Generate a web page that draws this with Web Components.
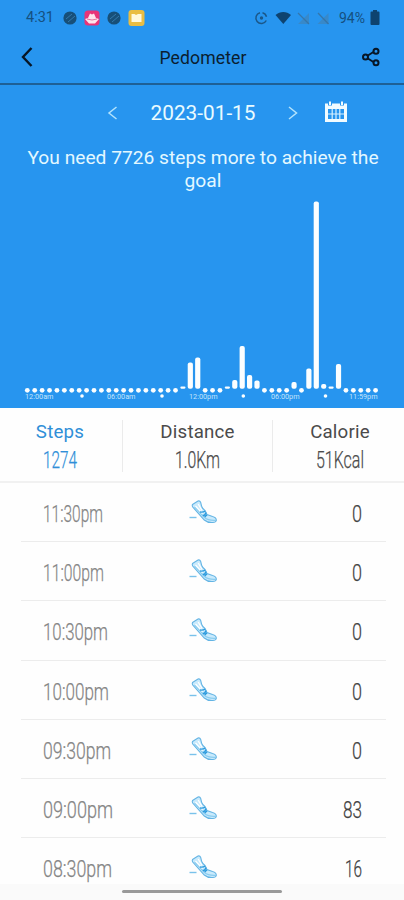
<!DOCTYPE html>
<html lang="en">
<head>
<meta charset="utf-8">
<title>Pedometer</title>
<style>
  body {
    margin: 0;
    width: 404px;
    height: 900px;
    overflow: hidden;
    background: #fefefe;
    font-family: Roboto, "Liberation Sans", sans-serif;
  }
</style>
</head>
<body>
<pedometer-app></pedometer-app>

<script>
const BLUE = "#2795ef";

// text squeezed to a given width, for the narrow numerals
class NarrowText extends HTMLElement {
  connectedCallback() {
    const width = this.getAttribute("width");
    const size = this.getAttribute("size") || 24;
    this.attachShadow({ mode: "open" }).innerHTML = /* HTML */ `
      <style>
        :host { display: block; line-height: 0; }
        svg { display: block; overflow: visible; }
        text { fill: currentColor; font-weight: 300; stroke: currentColor; stroke-width: .25px; }
      </style>
      <svg width="${width}" height="28">
        <text x="0" y="24" font-size="${size}"
          textLength="${width}" lengthAdjust="spacingAndGlyphs">${this.getAttribute("value")}</text>
      </svg>
    `;
  }
}

class StatusBar extends HTMLElement {
  connectedCallback() {
    this.attachShadow({ mode: "open" }).innerHTML = /* HTML */ `
      <style>
        :host {
          display: flex;
          align-items: center;
          justify-content: space-between;
          box-sizing: border-box;
          height: 35px;
          padding: 0 24px 0 26px;
          color: #15507f;
          font-size: 14px;
        }
        .group { display: flex; align-items: center; }
        svg { display: block; overflow: visible; }
        .time { width: 37px; font-size: 14.5px; }
        .battery { width: 27px; margin: 0 4px 0 9px; }
      </style>
      <div class="group">
        <span class="time">4:31</span>
        <svg width="84" height="18" viewBox="0 0 84 18">
          <circle cx="7" cy="9" r="6.6" fill="#174f78"/>
          <path d="M3 10l6-5M5 13l7-6" stroke="#3479ab" stroke-width="1"/>
          <rect x="21.5" y="1.5" width="15" height="15" rx="3.5" fill="#e83478"/>
          <path d="M22 10l3-1 2-4.5 2 1 2-1 2 4.5 3 1-4 4.5h-6z" fill="#ffe3ec"/>
          <path d="M24 10q5 2 10 0" fill="none" stroke="#e4749f" stroke-width="1"/>
          <circle cx="51" cy="9" r="6.6" fill="#174f78"/>
          <path d="M47 10l6-5M49 13l7-6" stroke="#3479ab" stroke-width="1"/>
          <rect x="65.5" y="1" width="16" height="16" rx="3" fill="#e9bd43"/>
          <path d="M68.5 5h3l1.5 1 2-1h3.5v8h-10z" fill="#fff8dc"/>
        </svg>
      </div>
      <div class="group">
        <svg width="74" height="18" viewBox="0 0 74 18">
          <path d="M4 3.7a5.5 5.5 0 1 0 6.3 7.8M6.500 3.700a5.500 5.500 0 0 1 4 4" fill="none" stroke="#1b5788" stroke-width="1.5"/>
          <circle cx="5.5" cy="9" r="1.7" fill="#1b5788"/>
          <path d="M19.5 6c4.500-4 11-4 15.500 0l-7.700 9z" fill="#0e4370"/>
          <path d="M53 4v11H42zM72.5 4v11h-11z" fill="#3f84bb" opacity=".7"/>
          <path d="M42 4l11 11M62 4l10.500 11" stroke="#3576ab" stroke-width="1.3"/>
        </svg>
        <span class="battery">94%</span>
        <svg width="10" height="15" viewBox="0 0 10 15">
          <path d="M3 0h4v1.5h1.500q1 0 1 1V14q0 1-1 1h-7q-1 0-1-1V2.500q0-1 1-1H3z" fill="#0e4370"/>
        </svg>
      </div>
    `;
  }
}

class TitleBar extends HTMLElement {
  connectedCallback() {
    this.attachShadow({ mode: "open" }).innerHTML = /* HTML */ `
      <style>
        :host {
          display: grid;
          grid-template-columns: 40px 1fr 40px;
          align-items: center;
          box-sizing: border-box;
          height: 50px;
          padding-bottom: 4px;
          border-bottom: 2px solid #1e6096;
          color: #0b1e30;
          text-align: center;
          font-size: 17.6px;
          letter-spacing: .1px;
        }
        svg { display: block; overflow: visible; }
        .title { padding: 2px 0 0 2px; }
      </style>
      <svg width="40" height="24" viewBox="0 0 40 24">
        <path d="M31.5 3L23 12l8.500 9" fill="none" stroke="#071626" stroke-width="2.4"/>
      </svg>
      <span class="title"><slot></slot></span>
      <svg width="40" height="24" viewBox="0 0 40 24">
        <path d="M1.5 12L11 6M1.500 12L11 18" stroke="#071626" stroke-width="1.9"/>
        <g fill="${BLUE}" stroke="#071626" stroke-width="2">
          <circle cx="1.5" cy="12" r="2.5"/>
          <circle cx="12" cy="6.2" r="2.5"/>
          <circle cx="12" cy="17.8" r="2.5"/>
        </g>
      </svg>
    `;
  }
}

class DatePicker extends HTMLElement {
  connectedCallback() {
    this.attachShadow({ mode: "open" }).innerHTML = /* HTML */ `
      <style>
        :host {
          display: grid;
          grid-template-columns: 11px 170px 11px 24px;
          align-items: center;
          height: 30px;
          padding: 13px 0 0 107px;
          color: #e9fbff;
          font-size: 20.8px;
          text-align: center;
        }
        svg { display: block; }
        .cal { margin: -2px 0 0 25px; }
      </style>
      <svg width="11" height="16" viewBox="0 0 11 16"><path d="M9.5 2L2 8l7.500 6" fill="none" stroke="#b3e3fc" stroke-width="1.5"/></svg>
      <span class="date"><slot></slot></span>
      <svg width="11" height="16" viewBox="0 0 11 16"><path d="M1 2l7.500 6L1 14" fill="none" stroke="#b3e3fc" stroke-width="1.5"/></svg>
      <svg class="cal" width="24" height="22" viewBox="0 0 24 22">
        <path d="M1 2.500h22V21H1z" fill="#f1fbff"/>
        <path d="M4 1h4v3.500H4zM16 1h4v3.500h-4z" fill="${BLUE}"/>
        <path d="M6 .5v3.500M18 .5v3.500" stroke="#f1fbff" stroke-width="2"/>
        <path d="M4 8h16v10H4z" fill="${BLUE}"/>
        <path d="M8.200 8v10M12 8v10M15.800 8v10M4 13h16" fill="none" stroke="#d9f2ff" stroke-width="1.200"/>
      </svg>
    `;
  }
}

class StepChart extends HTMLElement {
  connectedCallback() {
    // bar top of every half hour that has steps, the rest are dots
    const tops = {
      21: 386.5, 22: 362.5, 23: 357.5, 27: 386.5, 28: 380, 29: 346, 30: 375, 31: 380.5,
      36: 382, 38: 368.5, 39: 201.5, 40: 384, 41: 386.5, 42: 364
    };
    const labels = [["12:00am", 25], ["06:00am", 107], ["12:00pm", 189], ["06:00pm", 271], ["11:59pm", 349]];
    let bars = "";
    for (let i = 0; i < 48; i++) {
      const x = 27.3 + i * 7.41;
      bars += tops[i]
        ? `<rect x="${x - 2.6}" y="${tops[i]}" width="5.2" height="${388.7 - tops[i]}" rx="${Math.min(2, (388.7 - tops[i]) / 2)}"/>`
        : `<circle cx="${x}" cy="390.3" r="2.4"/>`;
    }
    this.attachShadow({ mode: "open" }).innerHTML = /* HTML */ `
      <style>
        :host { display: block; }
        svg { display: block; fill: #fbfeff; }
        text { font-size: 7px; fill: #c3e4fb; }
      </style>
      <svg width="404" height="213" viewBox="0 195 404 213">
        ${bars}
        ${[82, 162, 243.3, 325.5].map(x => `<circle cx="${x}" cy="396" r="1.8"/>`).join("")}
        ${labels.map(([text, x]) => `<text x="${x}" y="398.7" textLength="28.5" lengthAdjust="spacingAndGlyphs">${text}</text>`).join("")}
      </svg>
    `;
  }
}

class StatItem extends HTMLElement {
  connectedCallback() {
    this.attachShadow({ mode: "open" }).innerHTML = /* HTML */ `
      <style>
        :host {
          display: flex;
          flex-direction: column;
          align-items: center;
          box-sizing: border-box;
          height: 52px;
          color: #4b4b4b;
          font-size: 18.7px;
          letter-spacing: .2px;
        }
        :host([active]) { color: #2f8fd8; padding-right: 2px; }
        :host([divided]) { border-left: 1.5px solid #ebebeb; }
        .label { line-height: 24px; height: 24px; }
        narrow-text { letter-spacing: 0; }
      </style>
      <span class="label"><slot></slot></span>
      <narrow-text value="${this.getAttribute("value")}" width="${this.getAttribute("width")}" size="23.5"></narrow-text>
    `;
  }
}

class StepRow extends HTMLElement {
  connectedCallback() {
    this.attachShadow({ mode: "open" }).innerHTML = /* HTML */ `
      <style>
        :host {
          display: grid;
          grid-template-columns: 146px 30px 1fr;
          align-items: center;
          box-sizing: border-box;
          height: 59.2px;
          margin: 0 18px 0 21px;
          padding: 0 24px 0 22px;
          border-bottom: 1.5px solid #ececec;
          color: #858585;
        }
        .count { justify-self: end; color: #424242; }
        svg { display: block; }
      </style>
      <narrow-text value="${this.getAttribute("time")}" width="${this.getAttribute("time-width")}"></narrow-text>
      <svg width="30" height="26" viewBox="0 0 30 26">
        <path d="M3.500 5.500L9 2q1.800-.6 2.600 1.200l1 4q1 2.700 3.400 4.300l2 4 5.500 2q4 1 3.800 4-.4 2-3.500 2-5.500.3-8.500-2.500L3.700 8q-.8-1.500-.2-2.500z" fill="#c9eafc" stroke="#64b4e4" stroke-width="1.1"/>
        <path d="M5.500 8l10 10.500q3.500 3.300 11.500 2.800" fill="none" stroke="#8accef" stroke-width="1.2"/>
        <path d="M6.500 7l7 7.500M9.200 5l3.800 6.500" fill="none" stroke="#fff" stroke-width="1.3"/>
        <path d="M11 13q3.500 .5 5-1M17 13.500q-1.300 3.500-3.200 3M18 15.700l-2.300 2.300" fill="none" stroke="#2999dd" stroke-width="1.4"/>
        <path d="M.5 18.500h7" stroke="#79c2eb" stroke-width="1.4"/>
      </svg>
      <narrow-text class="count" value="${this.getAttribute("count")}" width="${this.getAttribute("count-width")}"></narrow-text>
    `;
  }
}

class PedometerApp extends HTMLElement {
  connectedCallback() {
    const rows = [
      ["11:30pm", 60, "0", 10],
      ["11:00pm", 61, "0", 10],
      ["10:30pm", 65, "0", 10],
      ["10:00pm", 66, "0", 10],
      ["09:30pm", 68, "0", 10],
      ["09:00pm", 70, "83", 19],
      ["08:30pm", 69, "16", 17]
    ];
    this.attachShadow({ mode: "open" }).innerHTML = /* HTML */ `
      <style>
        :host { display: block; position: relative; height: 900px; overflow: hidden; }
        .top { height: 408px; background: ${BLUE}; }
        .goal {
          box-sizing: border-box;
          height: 67px;
          margin: 0;
          padding: 19px 20px 0 22px;
          color: #e3f8ff;
          font-size: 19.2px;
          line-height: 22.5px;
          text-align: center;
        }
        .stats {
          display: grid;
          grid-template-columns: 122px 150px 135px;
          box-sizing: border-box;
          height: 75px;
          padding-top: 12px;
          border-bottom: 2px solid #f1f1f1;
        }
        .gesture {
          position: absolute;
          left: 0;
          right: 0;
          bottom: 0;
          height: 16px;
          background: #fafafa;
        }
        .gesture::before {
          content: "";
          display: block;
          width: 160px;
          height: 3px;
          margin: 6px auto 0;
          border-radius: 2px;
          background: #999;
        }
      </style>
      <div class="top">
        <status-bar></status-bar>
        <title-bar>Pedometer</title-bar>
        <date-picker>2023-01-15</date-picker>
        <p class="goal">You need 7726 steps more to achieve the goal</p>
        <step-chart></step-chart>
      </div>
      <div class="stats">
        <stat-item active value="1274" width="34">Steps</stat-item>
        <stat-item divided value="1.0Km" width="45">Distance</stat-item>
        <stat-item divided value="51Kcal" width="48">Calorie</stat-item>
      </div>
      ${rows.map(([time, tw, count, cw]) =>
        `<step-row time="${time}" time-width="${tw}" count="${count}" count-width="${cw}"></step-row>`).join("")}
      <div class="gesture"></div>
    `;
  }
}

customElements.define("narrow-text", NarrowText);
customElements.define("status-bar", StatusBar);
customElements.define("title-bar", TitleBar);
customElements.define("date-picker", DatePicker);
customElements.define("step-chart", StepChart);
customElements.define("stat-item", StatItem);
customElements.define("step-row", StepRow);
customElements.define("pedometer-app", PedometerApp);
</script>
</body>
</html>
